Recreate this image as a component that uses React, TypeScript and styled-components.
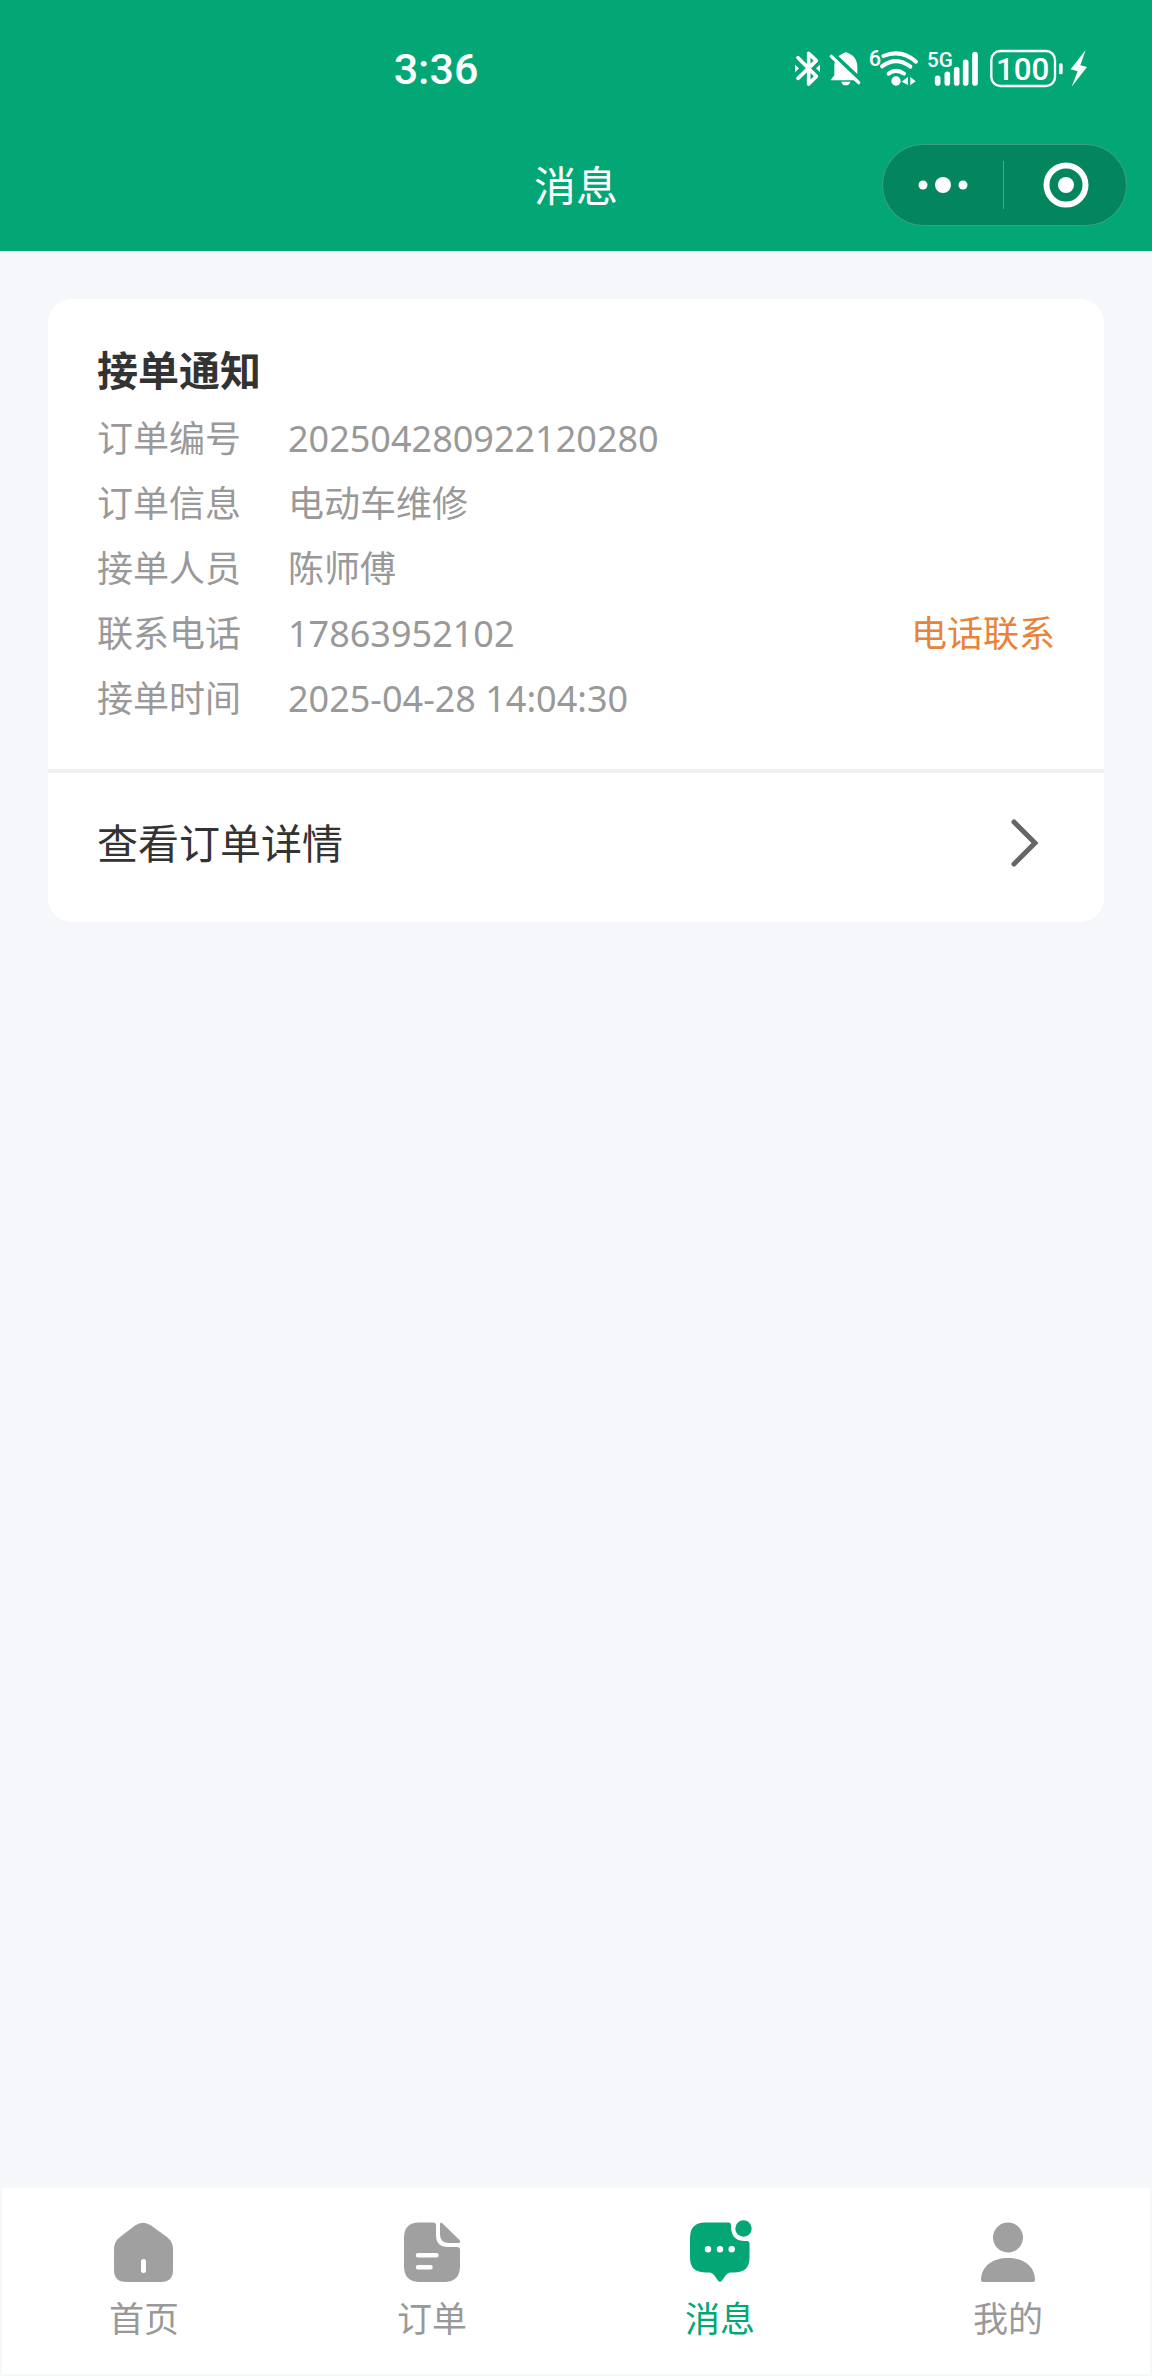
import React from 'react';
import styled, { createGlobalStyle } from 'styled-components';

const green = '#02a775';
const latin = '"Noto Sans", "Noto Sans CJK SC", sans-serif';

const GlobalStyle = createGlobalStyle`
  * { box-sizing: border-box; }
  body {
    margin: 0;
    background: #f5f7fb;
    color: #333;
    font-family: ${latin};
  }
  a { color: inherit; text-decoration: none; }
`;

const Page = styled.div`
  display: flex;
  flex-direction: column;
  min-height: 100vh;
`;

const Header = styled.header`
  background: ${green};
  color: #fff;
`;

const StatusBar = styled.div`
  display: flex;
  align-items: center;
  justify-content: space-between;
  height: 119px;
  padding: 18px 65px 0 34%;
`;

const Clock = styled.time`
  padding-left: 2px;
  font: 500 43px/48px Roboto, sans-serif;
`;

const StatusIcons = styled.div`
  display: flex;
  align-items: center;
  gap: 8px;
  font-family: Roboto, sans-serif;

  svg { display: block; height: 37px; overflow: visible; }
`;

const TitleBar = styled.div`
  display: grid;
  grid-template-columns: 1fr auto 1fr;
  align-items: center;
  height: 132px;
  padding: 0 25px;
`;

const Title = styled.h1`
  grid-column: 2;
  margin: 0;
  padding-top: 2px;
  font-size: 42px;
  line-height: 60px;
  font-weight: 400;
`;

const Capsule = styled.div`
  display: flex;
  align-items: center;
  justify-self: end;
  width: 245px;
  height: 82px;
  border: 1px solid rgba(255, 255, 255, 0.22);
  border-radius: 41px;
  background: #03855d;
`;

const CapsuleButton = styled.button`
  display: flex;
  flex: 1;
  align-items: center;
  justify-content: center;
  height: 48px;
  padding: 0;
  border: 0;
  background: none;
  color: #fff;

  & + & {
    padding-left: 2px;
    border-left: 1px solid rgba(255, 255, 255, 0.28);
  }
`;

const Content = styled.main`
  flex: 1;
  padding: 48px;
`;

const Card = styled.article`
  overflow: hidden;
  border-radius: 24px;
  background: #fff;
`;

const Notice = styled.section`
  padding: 47px 49px 38px;
`;

const NoticeTitle = styled.h2`
  margin: 0 0 12px;
  font-size: 41px;
  line-height: 48px;
  font-weight: 700;
`;

const Fields = styled.dl`
  margin: 0;
  color: #999;
  font-size: 36px;
  line-height: 65px;
`;

const Field = styled.div`
  display: grid;
  grid-template-columns: 191px 1fr;
  height: 65px;
`;

const Value = styled.dd`
  display: flex;
  justify-content: space-between;
  margin: 0;
`;

const CallLink = styled.a`
  color: #e8833a;
`;

const DetailLink = styled.a`
  display: flex;
  align-items: center;
  justify-content: space-between;
  padding: 40px 64px 49px 49px;
  border-top: 4px solid #efefef;
  font-size: 41px;
  line-height: 60px;
`;

const TabBar = styled.nav`
  display: grid;
  grid-template-columns: repeat(4, 1fr);
  padding: 31px 0 29px;
  background: #fff;
  box-shadow: inset 0 0 0 2px #f7f8fb;
`;

const Tab = styled.a<{ $active?: boolean }>`
  display: flex;
  flex-direction: column;
  align-items: center;
  gap: 2px;
  color: ${(p) => (p.$active ? green : '#999')};
  font-size: 35px;
  line-height: 56px;
`;

const TabIcon = styled.svg`
  display: block;
  width: 72px;
  height: 72px;
  overflow: visible;
`;

const fields = [
  { label: '订单编号', value: '202504280922120280' },
  { label: '订单信息', value: '电动车维修' },
  { label: '接单人员', value: '陈师傅' },
  { label: '联系电话', value: '17863952102', phone: true },
  { label: '接单时间', value: '2025-04-28 14:04:30' },
];

const tabs = [
  {
    name: '首页',
    icon: (
      <>
        <path fill="#a0a0a0" d="M27 8.500Q35 3 43 8.500L59 20Q65 25 65 32V53Q65 65 53 65H18Q6 65 6 53V32Q6 25 12 20Z" />
        <rect x="33" y="42" width="5" height="14" rx="2.500" fill="#fff" />
      </>
    ),
  },
  {
    name: '订单',
    icon: (
      <>
        <path fill="#a0a0a0" d="M23 5.500H37Q40 5.500 40 8.500V18Q40 30 52 30H61Q64 30 64 33V49Q64 65 48 65H24Q8 65 8 49V21Q8 5.500 23 5.500Z" />
        <path fill="#a0a0a0" d="M44 7Q44 5 46 6L63.500 23Q65 25 63 26H53Q44 26 44 17Z" />
        <path stroke="#fff" strokeWidth="4.500" strokeLinecap="round" d="M22 38.300H40.500M22 50.300H34.500" />
      </>
    ),
  },
  {
    name: '消息',
    active: true,
    icon: (
      <>
        <path fill={green} d="M21 5.500H45Q47 5.500 47 8V11Q48 24 61 24H63Q65.500 24 65.500 27V41Q65.500 55.500 50 55.500H46Q44 55.500 42 58L38 63.500Q36 66 34 63.500L30 58Q28 55.500 26 55.500H22Q6 55.500 6 41V21Q6 5.500 21 5.500Z" />
        <circle cx="59.500" cy="11.500" r="8.200" fill={green} />
        <g fill="#fff">
          <circle cx="24" cy="32.300" r="3.200" />
          <circle cx="36" cy="32.300" r="3.200" />
          <circle cx="47.700" cy="32.300" r="3.200" />
        </g>
      </>
    ),
  },
  {
    name: '我的',
    icon: (
      <g fill="#a0a0a0">
        <circle cx="36" cy="20.500" r="15" />
        <path d="M9 63C9 49 21 41 36 41S63 49 63 63Q63 65 61 65H11Q9 65 9 63Z" />
      </g>
    ),
  },
];

function SystemIcons() {
  return (
    <StatusIcons>
      <svg width="26" viewBox="45 57 78 111" aria-label="蓝牙">
        <path d="M54 80L109 136L86 159V67L109 89L54 142" fill="none" stroke="#fff" strokeWidth="11" strokeLinejoin="round" strokeLinecap="round" />
        <path d="M45 101L57 112L45 124ZM120 101L108 112L120 124Z" fill="#fff" />
      </svg>
      <svg width="32" viewBox="147 57 96 111" aria-label="静音">
        <path d="M152 148L163 132V104C163 84 176 72 188 68Q198 59 208 68C224 74 232 90 232 108V132L240 148Z" fill="#fff" />
        <path d="M184 152H211Q209 163 197 163Q186 163 184 152Z" fill="#fff" />
        <path d="M150 60L248 152" stroke={green} strokeWidth="12" />
        <path d="M154 76L236 155" stroke="#fff" strokeWidth="10" strokeLinecap="round" />
      </svg>
      <svg width="50" viewBox="267 57 150 111" aria-label="无线网络">
        <text x="266" y="106" fontSize="65" fontWeight="500" fill="#fff">6</text>
        <path d="M310 75Q364 53 408 92M306 106Q349 74 391 107M326 128Q348 111 372 128" fill="none" stroke="#fff" strokeWidth="12" strokeLinecap="round" />
        <circle cx="348" cy="150" r="14" fill="#fff" />
        <path d="M365 152L384 137V162ZM391 138L407 151L391 163Z" fill="#fff" />
      </svg>
      <svg width="55" viewBox="441 57 165 111" aria-label="信号">
        <text x="441" y="109" fontSize="62" fontWeight="500" fill="#fff">5G</text>
        <path d="M473 142V156M502 130V156M530 116V156M557 94V156M585 71V156" stroke="#fff" strokeWidth="17" strokeLinecap="round" />
      </svg>
      <svg width="73" viewBox="630 57 219 111" aria-label="电量">
        <rect x="634" y="60" width="191" height="105" rx="27" fill="none" stroke="#fff" strokeWidth="7" />
        <text x="728" y="146" fontSize="94" fontWeight="500" textAnchor="middle" fill="#fff">100</text>
        <rect x="837" y="97" width="11" height="33" rx="5" fill="#fff" />
      </svg>
      <svg width="16" viewBox="873 57 48 111" aria-label="充电中">
        <path d="M917 57L872 115L893 121L875 167L921 108L901 103Z" fill="#fff" />
      </svg>
    </StatusIcons>
  );
}

export default function App() {
  return (
    <Page>
      <GlobalStyle />
      <Header>
        <StatusBar>
          <Clock>3:36</Clock>
          <SystemIcons />
        </StatusBar>
        <TitleBar>
          <Title>消息</Title>
          <Capsule>
            <CapsuleButton type="button" aria-label="更多">
              <svg width="50" height="18" viewBox="0 0 50 18" fill="currentColor">
                <circle cx="5" cy="9" r="4.500" />
                <circle cx="25" cy="9" r="8" />
                <circle cx="45" cy="9" r="4.500" />
              </svg>
            </CapsuleButton>
            <CapsuleButton type="button" aria-label="关闭">
              <svg width="46" height="46" viewBox="0 0 46 46">
                <circle cx="23" cy="23" r="19.500" fill="none" stroke="currentColor" strokeWidth="6" />
                <circle cx="23" cy="23" r="8" fill="currentColor" />
              </svg>
            </CapsuleButton>
          </Capsule>
        </TitleBar>
      </Header>
      <Content>
        <Card>
          <Notice>
            <NoticeTitle>接单通知</NoticeTitle>
            <Fields>
              {fields.map((f) => (
                <Field key={f.label}>
                  <dt>{f.label}</dt>
                  <Value>
                    {f.value}
                    {f.phone && <CallLink href={`tel:${f.value}`}>电话联系</CallLink>}
                  </Value>
                </Field>
              ))}
            </Fields>
          </Notice>
          <DetailLink href="#detail">
            查看订单详情
            <svg width="32" height="48" viewBox="0 0 32 48" fill="none">
              <path d="M6 3L27 24L6 45" stroke="#666" strokeWidth="5" strokeLinecap="round" />
            </svg>
          </DetailLink>
        </Card>
      </Content>
      <TabBar>
        {tabs.map((t) => (
          <Tab key={t.name} href="#" $active={t.active} aria-current={t.active ? 'page' : undefined}>
            <TabIcon viewBox="0 0 72 72">{t.icon}</TabIcon>
            {t.name}
          </Tab>
        ))}
      </TabBar>
    </Page>
  );
}
